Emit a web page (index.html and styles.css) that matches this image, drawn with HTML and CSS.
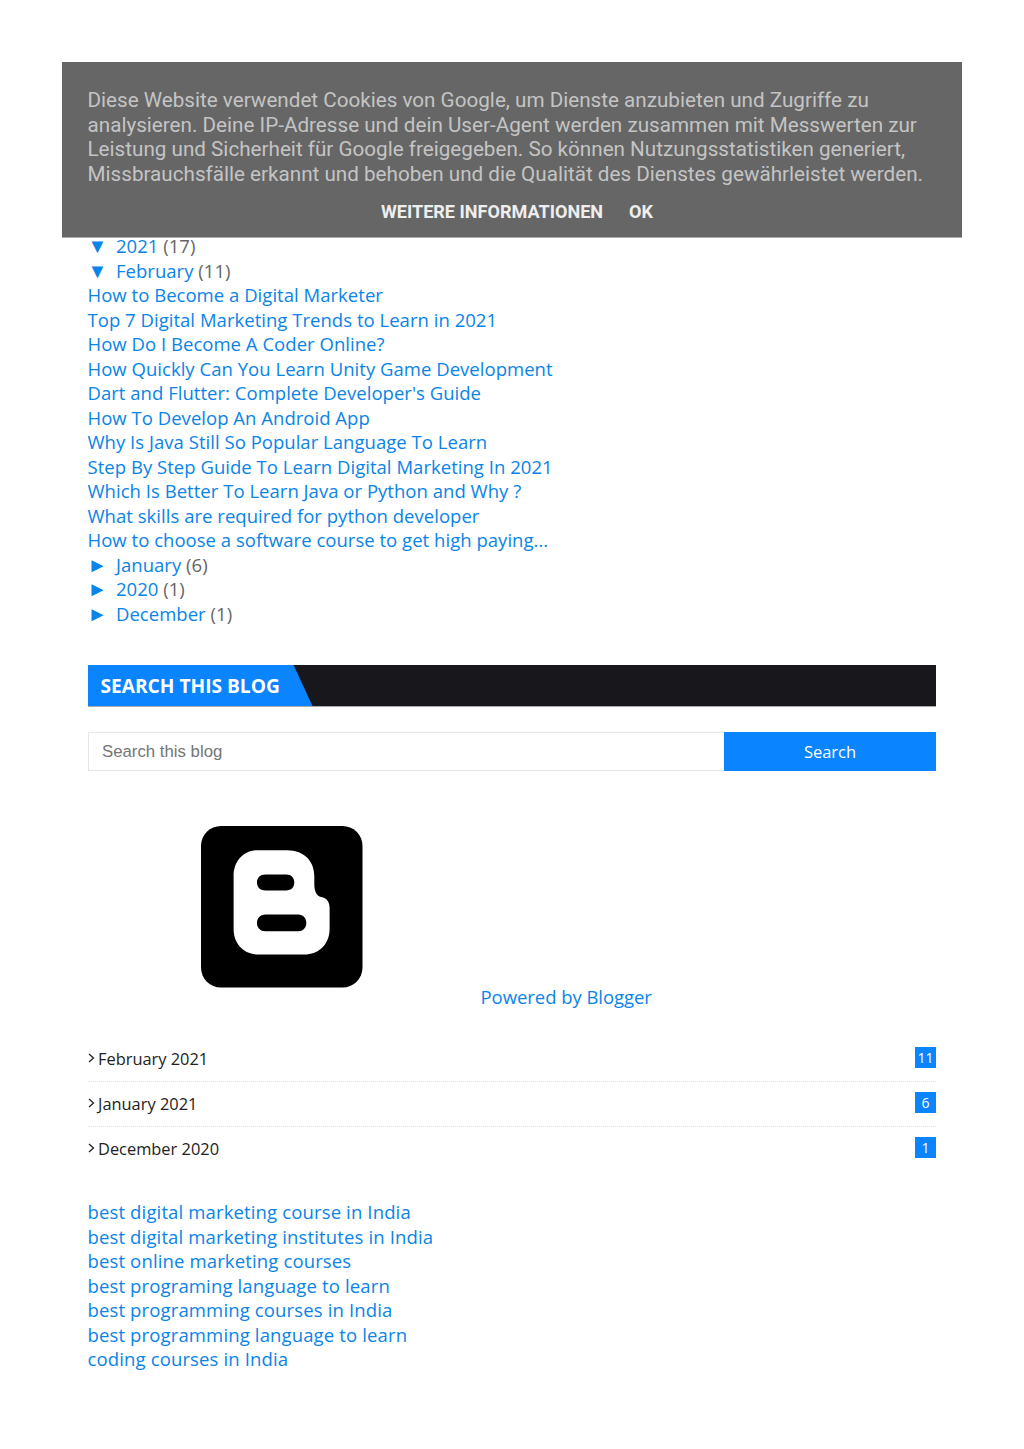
FILE: index.html
```html
<!DOCTYPE html>
<html lang="en">

<head>
    <meta charset="utf-8">
    <meta name="viewport" content="width=device-width, initial-scale=1.0">
    <title>Blog sidebar</title>
    <link rel="stylesheet" href="styles.css">
</head>

<body>
    <div class="cookie">
        <p class="cookie-text">Diese Website verwendet Cookies von Google, um Dienste anzubieten und Zugriffe zu analysieren. Deine IP-Adresse und dein User-Agent werden zusammen mit Messwerten zur Leistung und Sicherheit für Google freigegeben. So können Nutzungsstatistiken generiert, Missbrauchsfälle erkannt und behoben und die Qualität des Dienstes gewährleistet werden.</p>
        <div class="cookie-links">
            <a href="#">Weitere Informationen</a>
            <a href="#">OK</a>
        </div>
    </div>

    <main>
        <ul class="tree">
            <li><span class="arrow">▼</span><a href="#">2021</a> (17)</li>
            <li><span class="arrow">▼</span><a href="#">February</a> (11)</li>
            <li><a href="#">How to Become a Digital Marketer</a></li>
            <li><a href="#">Top 7 Digital Marketing Trends to Learn in 2021</a></li>
            <li><a href="#">How Do I Become A Coder Online?</a></li>
            <li><a href="#">How Quickly Can You Learn Unity Game Development</a></li>
            <li><a href="#">Dart and Flutter: Complete Developer's Guide</a></li>
            <li><a href="#">How To Develop An Android App</a></li>
            <li><a href="#">Why Is Java Still So Popular Language To Learn</a></li>
            <li><a href="#">Step By Step Guide To Learn Digital Marketing In 2021</a></li>
            <li><a href="#">Which Is Better To Learn Java or Python and Why ?</a></li>
            <li><a href="#">What skills are required for python developer</a></li>
            <li><a href="#">How to choose a software course to get high paying...</a></li>
            <li><span class="arrow">►</span><a href="#">January</a> (6)</li>
            <li><span class="arrow">►</span><a href="#">2020</a> (1)</li>
            <li><span class="arrow">►</span><a href="#">December</a> (1)</li>
        </ul>

        <h2 class="title"><span class="title-tab">Search This Blog</span></h2>

        <form class="search">
            <input class="search-input" type="text" placeholder="Search this blog">
            <button class="search-btn" type="button">Search</button>
        </form>

        <div class="powered">
            <svg class="blogger" viewBox="0 0 162 162" width="162" height="162">
                <rect width="161.5" height="161.5" rx="20" fill="#000"/>
                <path fill="#fff" fill-rule="evenodd" d="M56 24.3H86C104 24.3 113.3 36 113.3 50V58C113.3 66 116 70 120 71C126 72 128.6 76 128.6 82V103C128.6 118 118 128.6 103 128.6H58C43 128.6 32.6 118 32.6 103V50C32.6 35 43 24.3 56 24.3ZM64.5 48.6C59 48.6 56 52 56 56.6C56 61 59 64.6 64.5 64.6H85C90.5 64.6 93.3 61 93.3 56.6C93.3 52 90.5 48.6 85 48.6ZM64.5 88.6C59 88.6 56 92.5 56 97C56 101.5 59 105.3 64.5 105.3H97C102.5 105.3 105.3 101.5 105.3 97C105.3 92.5 102.5 88.6 97 88.6Z"/>
            </svg>
            <a class="powered-link" href="#">Powered by Blogger</a>
        </div>

        <ul class="archive">
            <li><span class="chev"><svg viewBox="0 0 7 10" width="7" height="10"><path d="M1 1l4.5 4L1 9" fill="none" stroke="#222" stroke-width="1.3"/></svg></span><a href="#">February 2021</a><span class="count">11</span></li>
            <li><span class="chev"><svg viewBox="0 0 7 10" width="7" height="10"><path d="M1 1l4.5 4L1 9" fill="none" stroke="#222" stroke-width="1.3"/></svg></span><a href="#">January 2021</a><span class="count">6</span></li>
            <li><span class="chev"><svg viewBox="0 0 7 10" width="7" height="10"><path d="M1 1l4.5 4L1 9" fill="none" stroke="#222" stroke-width="1.3"/></svg></span><a href="#">December 2020</a><span class="count">1</span></li>
        </ul>

        <ul class="labels">
            <li><a href="#">best digital marketing course in India</a></li>
            <li><a href="#">best digital marketing institutes in India</a></li>
            <li><a href="#">best online marketing courses</a></li>
            <li><a href="#">best programing language to learn</a></li>
            <li><a href="#">best programming courses in India</a></li>
            <li><a href="#">best programming language to learn</a></li>
            <li><a href="#">coding courses in India</a></li>
        </ul>
    </main>
</body></html>
```

FILE: styles.css
```css
body {
    margin: 0;
    background-color: #fff;
    color: #666;
    font-family: "Open Sans", sans-serif;
    font-size: 18.5px;
    line-height: 24.5px;
}

a {
    color: #0a84e8;
    text-decoration: none;
}

ul {
    list-style: none;
    margin: 0;
    padding: 0;
}

main {
    padding: 234px 88px 0 87.5px;
}

.cookie {
    position: absolute;
    top: 62px;
    left: 62px;
    width: 900px;
    height: 176px;
    box-sizing: border-box;
    padding: 26px 25.5px 0;
    background-color: #666;
    border-bottom: 1px solid #aaa;
    color: #c4c4c4;
    font-family: Roboto, sans-serif;
    font-size: 20.66px;
}

.cookie-text {
    margin: 0;
}

.cookie-links {
    display: flex;
    justify-content: center;
    gap: 26px;
    margin-top: 14px;
    padding-left: 10px;
}

.cookie-links a {
    color: #eee;
    font-size: 18.07px;
    font-weight: 700;
    text-transform: uppercase;
}

.tree {
    letter-spacing: 0.03px;
}

.arrow {
    display: inline-block;
    width: 28.5px;
    color: #0a84e8;
    font-size: 20px;
    line-height: 0;
}

.title {
    height: 41px;
    margin: 39px 0 25px;
    background-color: #17171c;
    border-bottom: 1px solid #aaa;
    box-sizing: content-box;
    font-size: 19.15px;
    line-height: 43px;
}

.title-tab {
    display: block;
    width: 225px;
    height: 41px;
    box-sizing: border-box;
    padding-left: 13px;
    background-color: #0a84ff;
    clip-path: polygon(0 0, 206px 0, 100% 100%, 0 100%);
    color: #fff;
    font-weight: 700;
    text-transform: uppercase;
}

.search {
    display: flex;
    height: 39px;
}

.search-input {
    flex: 1;
    min-width: 0;
    box-sizing: border-box;
    padding: 0 13.5px;
    border: 1px solid #e6e6e6;
    border-right: 0;
    color: #666;
    font-family: "Liberation Sans", sans-serif;
    font-size: 16.8px;
}

.search-input::placeholder {
    color: #757575;
}

.search-btn {
    width: 212px;
    border: 0;
    background-color: #0a84ff;
    color: #fff;
    font-family: "Open Sans", sans-serif;
    font-size: 16.5px;
}

.powered {
    display: flex;
    align-items: flex-end;
    margin-top: 55px;
    padding-left: 113px;
}

.blogger {
    display: block;
    margin-right: 118px;
}

.powered-link {
    margin-bottom: -21px;
    letter-spacing: -0.05px;
}

.archive {
    margin-top: 49px;
    color: #222;
    font-size: 16.4px;
}

.archive li {
    display: flex;
    align-items: center;
    height: 44px;
    border-bottom: 1px dotted #e2e2e2;
}

.archive li:last-child {
    border-bottom: 0;
}

.archive a {
    color: #222;
}

.chev {
    display: flex;
    width: 10.5px;
    margin-top: -2px;
}

.count {
    width: 21px;
    height: 21px;
    margin-left: auto;
    margin-bottom: 4px;
    background-color: #0a84ff;
    color: #fff;
    font-size: 14px;
    line-height: 21px;
    text-align: center;
}

.labels {
    margin-top: 29px;
    letter-spacing: 0.14px;
}
```
